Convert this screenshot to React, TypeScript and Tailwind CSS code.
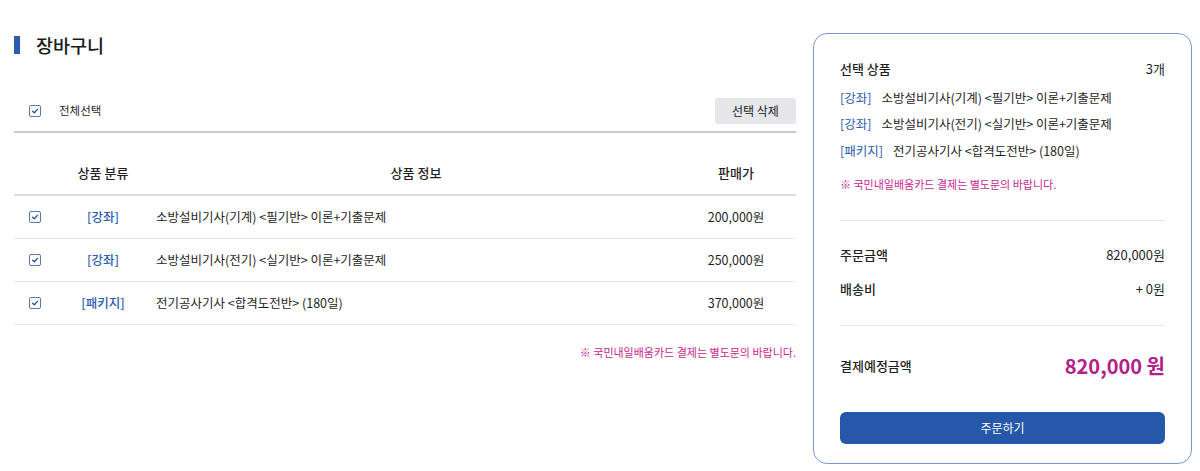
import React from 'react';

const FONT = { fontFamily: '"Noto Sans CJK KR", "Noto Sans", sans-serif' };

const items = [
  { cat: '강좌', name: '소방설비기사(기계) <필기반> 이론+기출문제', price: '200,000원' },
  { cat: '강좌', name: '소방설비기사(전기) <실기반> 이론+기출문제', price: '250,000원' },
  { cat: '패키지', name: '전기공사기사 <합격도전반> (180일)', price: '370,000원' },
];

function Check() {
  return (
    <span className="flex h-[12px] w-[12px] items-center justify-center rounded-[2px] border border-[#5b78a8] bg-white">
      <svg viewBox="0 0 10 10" className="h-[8px] w-[8px]" fill="none">
        <path d="M2 5.2 L4.2 7.2 L8 3" stroke="#23508f" strokeWidth="1.6" strokeLinecap="round" strokeLinejoin="round" />
      </svg>
    </span>
  );
}

export default function App() {
  return (
    <div className="flex h-[471px] w-[1200px] gap-[17px] bg-white pl-[14px] pr-[8px] text-[#1f1f1f]" style={FONT}>
      {/* Cart list */}
      <div className="w-[782px] shrink-0">
        <div className="mt-[36px] flex h-[18px] items-center gap-[16px]">
          <span className="h-[18px] w-[6px] bg-[#2a5db0]" />
          <h1 className="text-[18.5px] font-medium leading-none text-[#1a1a1a]">장바구니</h1>
        </div>

        <div className="mt-[44px] flex h-[26px] items-center">
          <span className="ml-[15px]"><Check /></span>
          <span className="ml-[18px] text-[11.5px]">전체선택</span>
          <button className="ml-auto h-[26px] w-[81px] rounded-[3px] bg-[#e6e7ea] text-[12px] text-[#222]">선택 삭제</button>
        </div>
        <div className="mt-[7px] h-[2px] bg-[#c9c9c9]" />

        <div className="grid h-[63px] grid-cols-[42px_94px_1fr_120px] items-end border-b-2 border-[#dcdcdc] pb-[11px] text-[13px] font-medium">
          <span />
          <span className="text-center leading-[20px]">상품 분류</span>
          <span className="pl-[6px] text-center leading-[20px]">상품 정보</span>
          <span className="text-center leading-[20px]">판매가</span>
        </div>
        {items.map((it, i) => (
          <div key={i} className="grid h-[43px] grid-cols-[42px_94px_1fr_120px] items-center border-b border-[#e8e8e8] text-[12.5px]">
            <span className="flex justify-center"><Check /></span>
            <span className="text-center font-medium text-[#2a5db0]">[{it.cat}]</span>
            <span className="pl-[6px]">{it.name}</span>
            <span className="text-center">{it.price}</span>
          </div>
        ))}
        <p className="mt-[19px] text-right text-[11px] text-[#c8268f]">※ 국민내일배움카드 결제는 별도문의 바랍니다.</p>
      </div>

      {/* Summary panel */}
      <div className="mt-[33px] flex h-[431px] w-[379px] flex-col rounded-[14px] border border-[#7a98cc] px-[26px] pt-[25px]">
        <div className="flex h-[20px] items-center justify-between text-[13px] font-medium">
          <span>선택 상품</span>
          <span className="font-normal">3개</span>
        </div>
        <div className="mt-[6px] flex flex-col text-[12.5px]">
          {items.map((it, i) => (
            <div key={i} className="flex h-[26.5px] items-center gap-[10px]">
              <span className="text-[#2a5db0]">[{it.cat}]</span>
              <span>{it.name}</span>
            </div>
          ))}
        </div>
        <p className="mt-[11px] text-[11px] text-[#c8268f]">※ 국민내일배움카드 결제는 별도문의 바랍니다.</p>
        <div className="mt-[28px] h-px bg-[#e6e6e6]" />
        <div className="mt-[24px] flex h-[20px] items-center justify-between text-[13px]">
          <span className="font-medium">주문금액</span>
          <span>820,000원</span>
        </div>
        <div className="mt-[14px] flex h-[20px] items-center justify-between text-[13px]">
          <span className="font-medium">배송비</span>
          <span>+ 0원</span>
        </div>
        <div className="mt-[26px] h-px bg-[#e6e6e6]" />
        <div className="mt-[26px] flex h-[28px] items-center justify-between">
          <span className="text-[13px] font-medium">결제예정금액</span>
          <span className="text-[20px] font-bold text-[#b3208b]">820,000 원</span>
        </div>
        <button className="mt-[32px] h-[32px] w-full rounded-[6px] bg-[#2558a8] text-[12px] text-white">주문하기</button>
      </div>
    </div>
  );
}
